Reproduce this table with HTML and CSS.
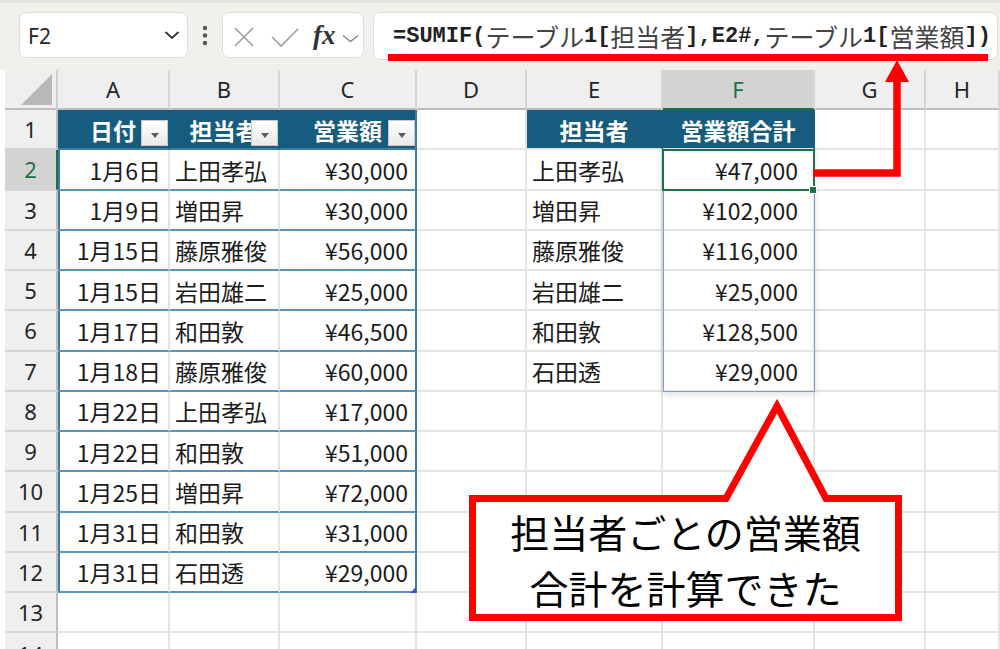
FILE: index.html
```html
<!DOCTYPE html>
<html lang="ja">
<head>
<meta charset="utf-8">
<title>SUMIF</title>
<link rel="stylesheet" href="styles.css">
</head>
<body>
<div class="page">
  <div class="toolbar">
    <div class="namebox">
      <span class="nb-text">F2</span>
      <svg class="nb-chev" width="16" height="10" viewBox="0 0 16 10"><path d="M1.5 2 L8 8 L14.5 2" fill="none" stroke="#333" stroke-width="1.8"/></svg>
    </div>
    <svg class="dots" width="8" height="46" viewBox="0 0 8 46"><circle cx="4" cy="16" r="2.2" fill="#555"/><circle cx="4" cy="23.5" r="2.2" fill="#555"/><circle cx="4" cy="31" r="2.2" fill="#555"/></svg>
    <div class="fxbox">
      <svg class="ic-x" width="22" height="22" viewBox="0 0 22 22"><path d="M2 2 L20 20 M20 2 L2 20" stroke="#9c9c9c" stroke-width="1.6" fill="none"/></svg>
      <svg class="ic-ok" width="28" height="20" viewBox="0 0 28 20"><path d="M1 10 L10 19 L27 2" stroke="#9c9c9c" stroke-width="1.6" fill="none"/></svg>
      <span class="fx">fx</span>
      <svg class="fx-chev" width="17" height="9" viewBox="0 0 17 9"><path d="M1 1.5 L8.5 7.5 L16 1.5" stroke="#888" stroke-width="1.4" fill="none"/></svg>
    </div>
    <div class="formula"><span class="m">=SUMIF(</span><span class="j">テーブル</span><span class="m">1[</span><span class="j">担当者</span><span class="m">],E2#,</span><span class="j">テーブル</span><span class="m">1[</span><span class="j">営業額</span><span class="m">])</span></div>
  </div>

  <div class="sheet">
    <div class="corner"><span class="tri"></span></div>
    <div class="ch">A</div><div class="ch">B</div><div class="ch">C</div><div class="ch">D</div><div class="ch">E</div><div class="ch ch-sel">F</div><div class="ch">G</div><div class="ch">H</div>

    <div class="rh">1</div>
    <div class="c th ctr">日付<span class="filter"></span></div>
    <div class="c th ctr">担当者<span class="filter"></span></div>
    <div class="c th th-last ctr">営業額<span class="filter"></span></div>
    <div class="c"></div>
    <div class="c th th2 ctr">担当者</div>
    <div class="c th th2 ctr">営業額合計</div>
    <div class="c"></div><div class="c"></div>

    <div class="rh rh-sel">2</div>
    <div class="c t ta r">1月6日</div><div class="c t">上田孝弘</div><div class="c t tc r">¥30,000</div>
    <div class="c"></div><div class="c">上田孝弘</div><div class="c r fcol">¥47,000</div><div class="c"></div><div class="c"></div>

    <div class="rh">3</div>
    <div class="c t ta r">1月9日</div><div class="c t">増田昇</div><div class="c t tc r">¥30,000</div>
    <div class="c"></div><div class="c">増田昇</div><div class="c r fcol">¥102,000</div><div class="c"></div><div class="c"></div>

    <div class="rh">4</div>
    <div class="c t ta r">1月15日</div><div class="c t">藤原雅俊</div><div class="c t tc r">¥56,000</div>
    <div class="c"></div><div class="c">藤原雅俊</div><div class="c r fcol">¥116,000</div><div class="c"></div><div class="c"></div>

    <div class="rh">5</div>
    <div class="c t ta r">1月15日</div><div class="c t">岩田雄二</div><div class="c t tc r">¥25,000</div>
    <div class="c"></div><div class="c">岩田雄二</div><div class="c r fcol">¥25,000</div><div class="c"></div><div class="c"></div>

    <div class="rh">6</div>
    <div class="c t ta r">1月17日</div><div class="c t">和田敦</div><div class="c t tc r">¥46,500</div>
    <div class="c"></div><div class="c">和田敦</div><div class="c r fcol">¥128,500</div><div class="c"></div><div class="c"></div>

    <div class="rh">7</div>
    <div class="c t ta r">1月18日</div><div class="c t">藤原雅俊</div><div class="c t tc r">¥60,000</div>
    <div class="c"></div><div class="c">石田透</div><div class="c r fcol">¥29,000</div><div class="c"></div><div class="c"></div>

    <div class="rh">8</div>
    <div class="c t ta r">1月22日</div><div class="c t">上田孝弘</div><div class="c t tc r">¥17,000</div>
    <div class="c"></div><div class="c"></div><div class="c"></div><div class="c"></div><div class="c"></div>

    <div class="rh">9</div>
    <div class="c t ta r">1月22日</div><div class="c t">和田敦</div><div class="c t tc r">¥51,000</div>
    <div class="c"></div><div class="c"></div><div class="c"></div><div class="c"></div><div class="c"></div>

    <div class="rh">10</div>
    <div class="c t ta r">1月25日</div><div class="c t">増田昇</div><div class="c t tc r">¥72,000</div>
    <div class="c"></div><div class="c"></div><div class="c"></div><div class="c"></div><div class="c"></div>

    <div class="rh">11</div>
    <div class="c t ta r">1月31日</div><div class="c t">和田敦</div><div class="c t tc r">¥31,000</div>
    <div class="c"></div><div class="c"></div><div class="c"></div><div class="c"></div><div class="c"></div>

    <div class="rh">12</div>
    <div class="c t ta r">1月31日</div><div class="c t">石田透</div><div class="c t tc r">¥29,000</div>
    <div class="c"></div><div class="c"></div><div class="c"></div><div class="c"></div><div class="c"></div>

    <div class="rh">13</div>
    <div class="c"></div><div class="c"></div><div class="c"></div><div class="c"></div><div class="c"></div><div class="c"></div><div class="c"></div><div class="c"></div>

    <div class="rh rh-cut">14</div>
    <div class="c"></div><div class="c"></div><div class="c"></div><div class="c"></div><div class="c"></div><div class="c"></div><div class="c"></div><div class="c"></div>
  </div>

  <div class="spill"></div>
  <div class="sel"></div>
  <div class="fill-handle"></div>
  <div class="table-handle"></div>

  <svg class="annot" width="1000" height="649" viewBox="0 0 1000 649">
    <rect x="388" y="54" width="600" height="7" fill="#ff0000"/>
    <polyline points="813,173 897,173 897,78" fill="none" stroke="#ff0000" stroke-width="7.5" stroke-linejoin="miter"/>
    <polygon points="885,82 897,60 909,82" fill="#ff0000"/>
    <polygon points="472.5,498.5 726,498.5 777,406 826,498.5 898.5,498.5 898.5,617.5 472.5,617.5" fill="#ffffff" stroke="#ff0000" stroke-width="7" stroke-linejoin="miter"/>
  </svg>
  <div class="callout-text">
    <span>担当者ごとの営業額</span>
    <span>合計を計算できた</span>
  </div>
</div>
</body>
</html>
```

FILE: styles.css
```css
body {
  margin: 0;
}

.page {
  position: relative;
  width: 1000px;
  height: 649px;
  overflow: hidden;
  background: #ffffff;
  font-family: "Noto Sans CJK JP", "Noto Sans", sans-serif;
}

/* ---------- toolbar ---------- */
.toolbar {
  height: 70px;
  box-sizing: border-box;
  border-top: 3px solid #e4e3dc;
  padding-top: 9px;
  background: #f1f0ea;
  display: flex;
  align-items: flex-start;
}

.namebox {
  margin-left: 19px;
  width: 169px;
  height: 46px;
  box-sizing: border-box;
  background: #ffffff;
  border: 1px solid #dedede;
  border-radius: 7px;
  display: flex;
  align-items: center;
  justify-content: space-between;
  padding: 0 7px 0 8px;
}

.nb-text {
  font-family: "Noto Sans", sans-serif;
  font-size: 21px;
  color: #262626;
  margin-top: 2px;
}

.dots {
  margin-left: 13px;
}

.fxbox {
  margin-left: 13px;
  width: 142px;
  height: 46px;
  box-sizing: border-box;
  background: #ffffff;
  border: 1px solid #dedede;
  border-radius: 7px;
  display: flex;
  align-items: center;
  padding-left: 10px;
}

.ic-x {
  margin-top: 4px;
}

.ic-ok {
  margin-left: 16px;
  margin-top: 4px;
}

.fx {
  margin-left: 14px;
  font-family: "Liberation Serif", serif;
  font-style: italic;
  font-weight: bold;
  font-size: 27px;
  color: #333333;
  line-height: 1;
}

.fx-chev {
  margin-left: 6px;
  margin-top: 6px;
}

.formula {
  margin-left: 9px;
  width: 625px;
  height: 48px;
  box-sizing: border-box;
  background: #ffffff;
  border: 1px solid #dedede;
  border-radius: 7px;
  padding-left: 19px;
  display: flex;
  align-items: center;
  white-space: nowrap;
  overflow: hidden;
  color: #222222;
}

.formula .m {
  font-family: "Liberation Mono", monospace;
  font-weight: bold;
  font-size: 22px;
}

.formula .j {
  font-family: "Noto Sans CJK JP", sans-serif;
  font-size: 25px;
  color: #444444;
}

/* ---------- sheet ---------- */
.sheet {
  padding-left: 5px;
  display: grid;
  grid-template-columns: 53px 112px 110px 137px 110px 136px 152px 111px 74px;
  grid-template-rows: 40px;
  grid-auto-rows: 40.25px;
}

.corner {
  position: relative;
  background: #efefef;
  border-right: 2px solid #cfcfcf;
  border-bottom: 2px solid #bdbdbd;
}

.tri {
  position: absolute;
  right: 4px;
  bottom: 3px;
  width: 0;
  height: 0;
  border-left: 31px solid transparent;
  border-bottom: 31px solid #b9b9b9;
}

.ch {
  background: #efefef;
  border-right: 2px solid #d6d6d6;
  border-bottom: 2px solid #bdbdbd;
  display: flex;
  align-items: center;
  justify-content: center;
  font-family: "Noto Sans", sans-serif;
  font-size: 22px;
  color: #262626;
}

.ch-sel {
  background: #d3d3d3;
  color: #1e7145;
  border-bottom: 2px solid #1e7145;
}

.rh {
  background: #efefef;
  border-right: 2px solid #bdbdbd;
  border-bottom: 2px solid #d6d6d6;
  display: flex;
  align-items: center;
  justify-content: center;
  font-family: "Noto Sans", sans-serif;
  font-size: 22px;
  color: #262626;
}

.rh-sel {
  background: #d3d3d3;
  color: #1e7145;
  border-right: 2px solid #1e7145;
}

.rh-cut {
  align-items: flex-start;
  padding-top: 6px;
}

.c {
  position: relative;
  box-sizing: border-box;
  border-right: 2px solid #e4e4e4;
  border-bottom: 2px solid #e4e4e4;
  display: flex;
  align-items: center;
  padding: 1px 5px 0 5px;
  font-size: 23px;
  color: #1c1c1c;
  white-space: nowrap;
  overflow: hidden;
}

.r {
  justify-content: flex-end;
  padding-right: 7px;
}

.ctr {
  justify-content: center;
}

.fcol {
  padding-right: 15px;
}

/* table body */
.t {
  border-bottom: 2px solid #5c93b8;
}

.ta {
  box-shadow: inset 2px 0 0 #3f7aa0;
}

.tc {
  border-right: 2px solid #3f7aa0;
}

/* table header */
.th {
  background: #165c7e;
  color: #ffffff;
  font-weight: bold;
  border-right-color: #165c7e;
  border-bottom: 2px solid #3f7aa0;
}

.th-last {
  border-right-color: #3f7aa0;
}

.th2 {
  border-bottom-color: #e4e4e4;
}

.filter {
  position: absolute;
  right: 0;
  top: 10px;
  width: 27px;
  height: 26px;
  box-sizing: border-box;
  border: 1px solid #c9c9c9;
  background: linear-gradient(#ffffff, #e9e9e9);
}

.filter::after {
  content: "";
  position: absolute;
  left: 9px;
  top: 12px;
  width: 0;
  height: 0;
  border-left: 4.5px solid transparent;
  border-right: 4.5px solid transparent;
  border-top: 5px solid #5d5d5d;
}

/* ---------- overlays ---------- */
.spill {
  position: absolute;
  left: 663px;
  top: 150px;
  width: 152px;
  height: 242px;
  box-sizing: border-box;
  border: 1px solid #7c9bd4;
  box-shadow: 0 2px 7px rgba(0, 0, 0, 0.14);
}

.sel {
  position: absolute;
  left: 662px;
  top: 149px;
  width: 153px;
  height: 42px;
  box-sizing: border-box;
  border: 2px solid #1f7244;
}

.fill-handle {
  position: absolute;
  left: 809px;
  top: 186px;
  width: 8px;
  height: 8px;
  box-sizing: border-box;
  background: #1f7244;
  border: 1px solid #ffffff;
}

.table-handle {
  position: absolute;
  left: 410px;
  top: 587px;
  width: 0;
  height: 0;
  border-left: 6px solid transparent;
  border-bottom: 6px solid #3558c0;
}

.annot {
  position: absolute;
  left: 0;
  top: 0;
}

.callout-text {
  position: absolute;
  left: 469px;
  top: 497px;
  width: 433px;
  height: 124px;
  display: flex;
  flex-direction: column;
  align-items: center;
  justify-content: center;
  font-family: "Noto Sans CJK JP", sans-serif;
  font-weight: 400;
  font-size: 39px;
  line-height: 56px;
  color: #000000;
}
```
